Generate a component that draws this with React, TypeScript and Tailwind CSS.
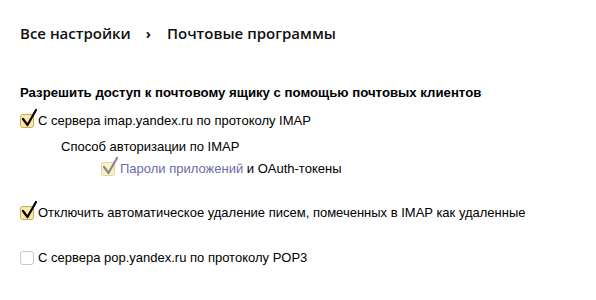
function Check({ checked, muted }: { checked?: boolean; muted?: boolean }) {
  const box = !checked
    ? 'bg-white border-[#c8c8c8]'
    : muted
      ? 'bg-[#fcf0c8] border-[#e2d3a3]'
      : 'bg-[#fce8a0] border-[#c2ab66]'
  return (
    <span className={`relative inline-block w-[14px] h-[14px] shrink-0 rounded-[3px] border ${box}`}>
      {checked && (
        <svg
          className="absolute left-[-1px] top-[-7px] overflow-visible"
          width="18"
          height="20"
          viewBox="0 0 18 20"
          fill="none"
        >
          <path
            d="M3 11 L7.5 17 L16 2"
            stroke={muted ? '#8a8a8a' : '#000'}
            strokeWidth="2.2"
            strokeLinecap="round"
            strokeLinejoin="round"
          />
        </svg>
      )}
    </span>
  )
}

export default function App() {
  return (
    <div className="w-[596px] h-[300px] bg-white px-5 font-['Liberation_Sans',Arial,sans-serif] text-[13px] text-black overflow-hidden">
      {/* Breadcrumbs */}
      <div className="mt-[22px] h-[22px] flex items-center font-['Open_Sans',sans-serif] text-[15px] font-semibold text-[#111]">
        <span>Все настройки</span>
        <span className="ml-[15px] mr-[16px] text-[14px] font-bold">›</span>
        <span>Почтовые программы</span>
      </div>

      <div className="mt-[41px] h-[16px] leading-[16px] font-bold text-[13.2px]">
        Разрешить доступ к почтовому ящику с помощью почтовых клиентов
      </div>

      <div className="mt-[12px] h-[16px] flex items-center gap-[4px] leading-[16px]">
        <Check checked />
        <span>С сервера imap.yandex.ru по протоколу IMAP</span>
      </div>

      <div className="mt-[10px] h-[16px] pl-[41px] leading-[16px]">Способ авторизации по IMAP</div>

      <div className="mt-[6px] h-[16px] pl-[81px] flex items-center gap-[5px] leading-[16px]">
        <Check checked muted />
        <span>
          <span className="text-[#6b6ba8]">Пароли приложений</span> и OAuth-токены
        </span>
      </div>

      <div className="mt-[28px] h-[16px] flex items-center gap-[4px] leading-[16px]">
        <Check checked />
        <span>Отключить автоматическое удаление писем, помеченных в IMAP как удаленные</span>
      </div>

      <div className="mt-[29px] h-[16px] flex items-center gap-[4px] leading-[16px]">
        <Check />
        <span>С сервера pop.yandex.ru по протоколу POP3</span>
      </div>
    </div>
  )
}
